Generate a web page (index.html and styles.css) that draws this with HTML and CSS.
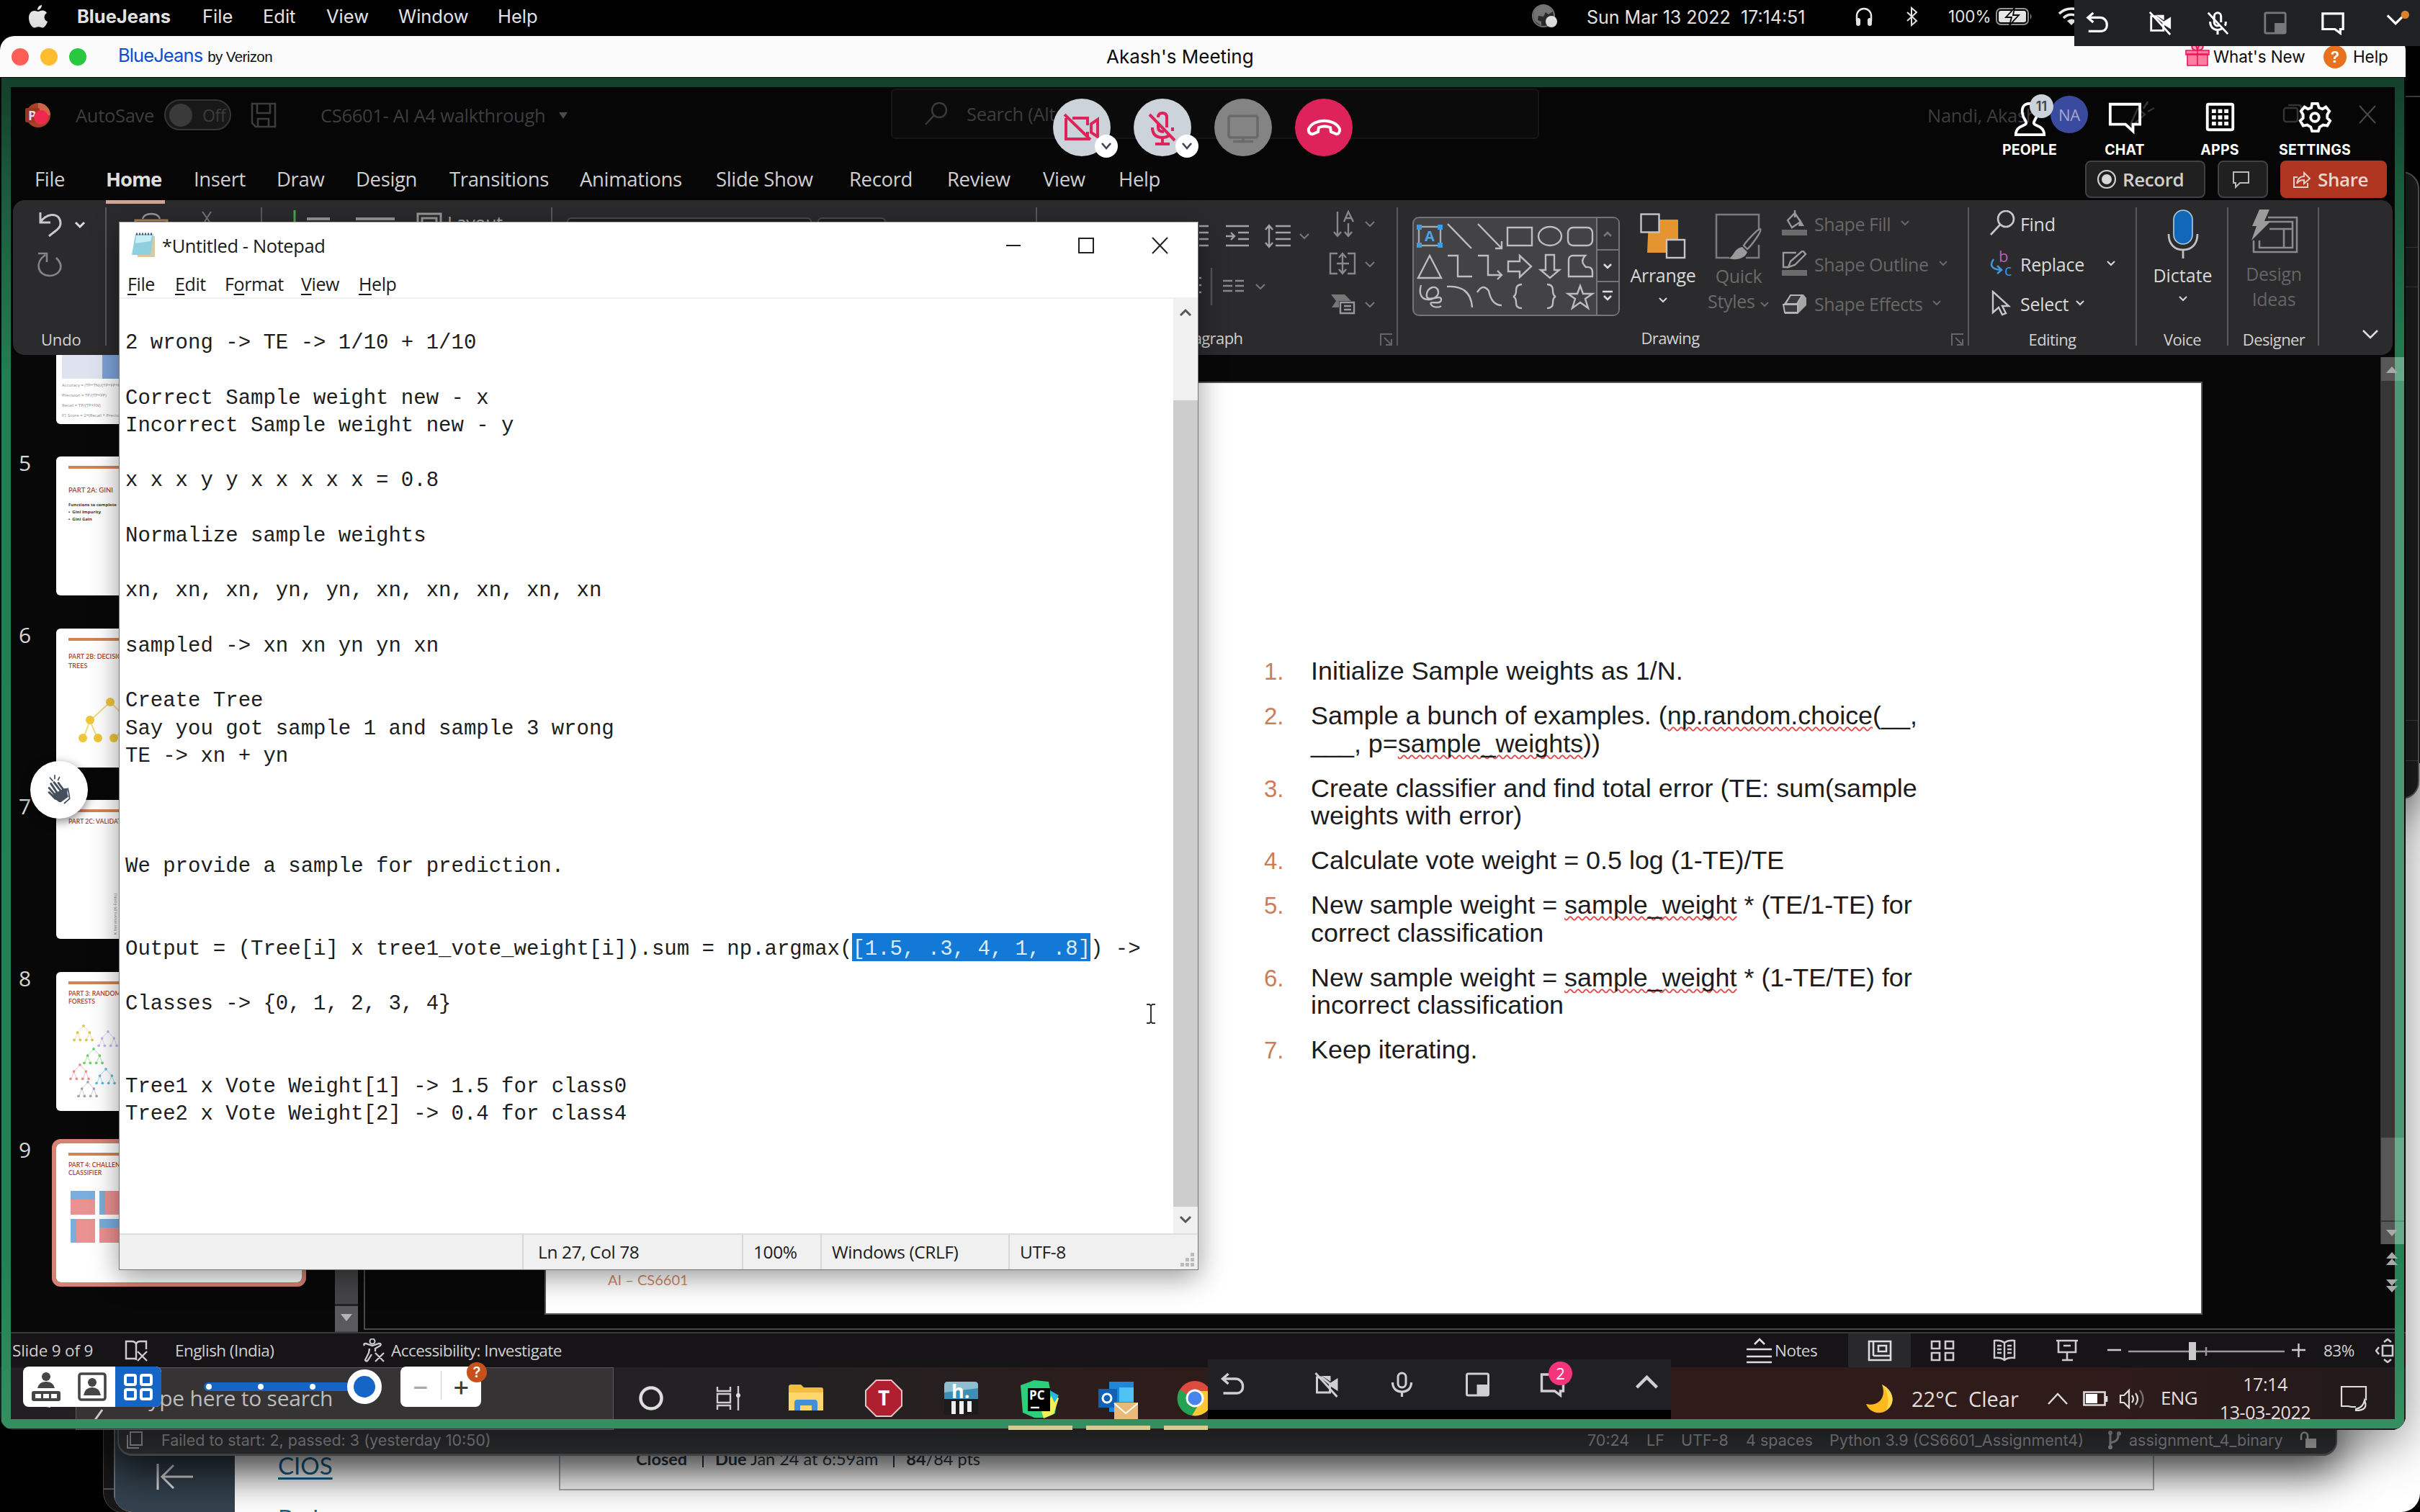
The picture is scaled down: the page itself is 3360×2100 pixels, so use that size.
FILE: index.html
```html
<!DOCTYPE html>
<html lang="en">
<head>
<meta charset="utf-8">
<title>Akash's Meeting</title>
<link rel="stylesheet" href="styles.css">
</head>
<body>
<svg width="0" height="0" class="defs">
  <defs>
    <symbol id="chev" viewBox="0 0 14 10"><path d="M2 2l5 5 5-5" fill="none" stroke="currentColor" stroke-width="2"/></symbol>
    <symbol id="i-undo" viewBox="0 0 36 36"><path d="M12 3L4 10l8 7M4 10h18a10 10 0 0 1 10 10v2a8 8 0 0 1-8 8H5" fill="none" stroke="currentColor" stroke-width="3.4"/></symbol>
    <symbol id="i-camoff" viewBox="0 0 36 36"><path d="M5 8v21h18V17L12 8z" fill="none" stroke="currentColor" stroke-width="3"/><path d="M23 16l11-7v18l-11-7zM12 6h12v8z" fill="currentColor"/><path d="M3 2l30 33" stroke="currentColor" stroke-width="3"/></symbol>
    <symbol id="i-micoff" viewBox="0 0 36 36"><path d="M13 13V8a5 5 0 0 1 10 0v9M13 13v4a5 5 0 0 0 8 4M7 16c0 7 4 12 11 12 3 0 5-1 7-2M30 16c0 2 0 4-1 6M18 28v7" fill="none" stroke="currentColor" stroke-width="3.2"/><path d="M4 3l29 31" stroke="currentColor" stroke-width="3"/></symbol>
    <symbol id="i-mic" viewBox="0 0 36 36"><rect x="12.500" y="2" width="11" height="20" rx="5.500" fill="none" stroke="currentColor" stroke-width="3"/><path d="M5 15c0 8 5 13 13 13s13-5 13-13M18 28v7" fill="none" stroke="currentColor" stroke-width="3.2"/></symbol>
    <symbol id="i-pip" viewBox="0 0 36 36"><rect x="3" y="3" width="30" height="30" rx="2" fill="none" stroke="currentColor" stroke-width="3"/><path d="M17 18h16v15H17z" fill="currentColor"/></symbol>
    <symbol id="i-chat" viewBox="0 0 36 36"><path d="M3 4h30v23h-4v6l-8-6H3z" fill="none" stroke="currentColor" stroke-width="3.4"/></symbol>
    <symbol id="tree" viewBox="0 0 34 28"><path d="M17 3L8 13M17 3l9 10M8 13L4 24M8 13l4 11M26 13l-5 11M26 13l4 11" fill="none" stroke="currentColor" stroke-width="1" opacity=".6"/><g fill="currentColor"><circle cx="17" cy="3" r="2"/><circle cx="8" cy="13" r="2"/><circle cx="26" cy="13" r="2"/><circle cx="3" cy="24" r="2"/><circle cx="12" cy="24" r="2"/><circle cx="21" cy="24" r="2"/><circle cx="30" cy="24" r="2"/></g></symbol>
  </defs>
</svg>

<main class="desktop">
  <section class="back-window"><i></i></section>
  <section class="browser">
    <aside class="canvas-nav"><svg width="52" height="40" viewBox="0 0 52 40"><path d="M2 2v36M51 20H8M24 4L8 20l16 16" fill="none" stroke="#e6e6e6" stroke-width="3"/></svg></aside>
    <nav class="course-links"><a>CIOS</a><a>Badgr</a></nav>
    <div class="assignment"><b>Closed</b><span><b>Due</b> Jan 24 at 6:59am</span><span><b>84</b>/84 pts</span></div>
  </section>
  <section class="side-window"><i></i><i></i><i></i><i></i></section>
  <div class="side-line"></div>

  <footer class="ide-bar">
    <svg width="24" height="26" viewBox="0 0 24 26"><path d="M6 2h16v18H6zM2 6v18h16" fill="none" stroke="#8a8b8d" stroke-width="2"/></svg>
    <span>Failed to start: 2, passed: 3 (yesterday 10:50)</span>
    <span>70:24</span><span>LF</span><span>UTF-8</span><span>4 spaces</span><span>Python 3.9 (CS6601_Assignment4)</span>
    <svg width="20" height="28" viewBox="0 0 20 28"><path d="M4 5v18M4 18c8-2 11-4 11-11" fill="none" stroke="#8a8b8d" stroke-width="3"/><g fill="#8a8b8d"><circle cx="4" cy="4" r="3"/><circle cx="4" cy="24" r="3"/><circle cx="16" cy="5" r="3"/></g></svg>
    <span>assignment_4_binary</span>
    <svg width="24" height="24" viewBox="0 0 24 24"><path d="M8 10h15v13H8z" fill="#a0a0a0"/><path d="M2 12V6a4 4 0 0 1 9 0v5" fill="none" stroke="#a0a0a0" stroke-width="2.500"/></svg>
  </footer>

  <header class="menubar">
    <svg width="28" height="32" viewBox="0 0 28 32"><path d="M19 0c0 4-3 7-6 7 0-4 3-7 6-7zM14 9c1.500 0 3-1.500 6-1.500 2.500 0 5 1.500 6 3.500-5 3-4.500 10 1 12-1.500 4-4 8.500-7 8.500-2 0-3-1.200-5.500-1.200S11 31.500 9 31.500C5 31.500 1 24 1 18 1 11 5 8 9 8c2 0 3.500 1 5 1z" fill="#ececec"/></svg>
    <b>BlueJeans</b><span>File</span><span>Edit</span><span>View</span><span>Window</span><span>Help</span>
    <svg width="38" height="36" viewBox="0 0 38 36"><circle cx="17" cy="17" r="15" fill="#2b2b2b" stroke="#777" stroke-width="2"/><path d="M5 9c5-6 14-9 20-4l5 6-6 4-4-3-3 6-7-1-1 6 5 2v6l-8-6c-4-5-3-11-1-16z" fill="#777"/><circle cx="28" cy="25" r="8" fill="#e8e8e8"/></svg>
    <span class="clock">Sun Mar 13 2022&nbsp; 17:14:51</span>
    <svg width="28" height="28" viewBox="0 0 28 28"><path d="M4 20v-7a10 10 0 0 1 20 0v7" fill="none" stroke="#eee" stroke-width="2.500"/><rect x="3" y="16" width="6" height="11" rx="3" fill="#eee"/><rect x="19" y="16" width="6" height="11" rx="3" fill="#eee"/></svg>
    <svg width="18" height="28" viewBox="0 0 18 28"><path d="M2 8l13 12-7 6V2l7 6L2 20" fill="none" stroke="#eee" stroke-width="2"/></svg>
    <span class="pct">100%</span>
    <svg width="52" height="24" viewBox="0 0 52 24"><rect x="1" y="1" width="44" height="22" rx="6" fill="none" stroke="#999" stroke-width="2"/><rect x="4" y="4" width="38" height="16" rx="3" fill="#eee"/><path d="M48 8q3 4 0 8z" fill="#999"/><path d="M26 0l-12 13h8l-3 11 13-14h-8z" fill="#eee" stroke="#000" stroke-width="1.800"/></svg>
    <svg width="36" height="26" viewBox="0 0 36 26"><path d="M1 9a24 24 0 0 1 34 0M7 15a15 15 0 0 1 22 0" fill="none" stroke="#eee" stroke-width="3.500"/><path d="M12 19l6 6 6-6q-6-5-12 0z" fill="#eee"/></svg>
  </header>

  <div class="float-bar">
    <svg><use href="#i-undo"/></svg><svg><use href="#i-camoff"/></svg><svg><use href="#i-micoff"/></svg><svg class="dim"><use href="#i-pip"/></svg><svg><use href="#i-chat"/></svg>
    <svg class="down" viewBox="0 0 36 36"><path d="M4 12l12 12 12-12" fill="none" stroke="#fff" stroke-width="3.400"/><circle cx="30" cy="11" r="6" fill="#d9822b"/></svg>
  </div>

  <section class="meeting">
    <header class="titlebar">
      <div class="lights"><i></i><i></i><i></i></div>
      <div class="brand"><span>BlueJeans</span><small>by Verizon</small></div>
      <h1>Akash's Meeting</h1>
      <svg class="gift" width="34" height="32" viewBox="0 0 34 32"><path d="M17 9c-10 0-9-9-4-8 3 1 4 8 4 8zm0 0c10 0 9-9 4-8-3 1-4 8-4 8z" fill="#ff9db4" stroke="#e8175d" stroke-width="2"/><path d="M3 14h28v16H3zM1 9h32v6H1z" fill="#ff7f9f" stroke="#e8175d" stroke-width="1.600"/><path d="M17 9v21" stroke="#e8175d" stroke-width="1.600"/></svg>
      <span>What's New</span><i class="q">?</i><span>Help</span>
    </header>

    <div class="share">
      <div class="ppt-title">
        <svg width="36" height="36" viewBox="0 0 36 36"><circle cx="18" cy="18" r="17" fill="#a8412a"/><path d="M18 1a17 17 0 0 1 17 17H18z" fill="#d0644a"/><rect x="0" y="8" width="20" height="20" rx="2" fill="#9c3520"/><text x="4" y="25" font-size="18" font-weight="700" fill="#ddd">P</text><circle cx="22" cy="21" r="10" fill="#f02850"/></svg>
        <span>AutoSave</span>
        <div class="toggle"><i></i>Off</div>
        <svg width="36" height="36" viewBox="0 0 36 36"><path d="M2 2h32v32H7l-5-5zM9 2v13h18V2M10 34V23h15v11" fill="none" stroke="#3c3c3e" stroke-width="2.600"/></svg>
        <span>CS6601- AI A4 walkthrough</span><em></em>
        <div class="search"><svg width="34" height="34" viewBox="0 0 34 34"><circle cx="21" cy="12" r="10" fill="none" stroke="#3a3a3d" stroke-width="2.500"/><path d="M14 19L2 32" stroke="#3a3a3d" stroke-width="2.500"/></svg>Search (Alt+Q)</div>
        <span class="user">Nandi, Akash</span><i class="na">NA</i>
        <svg width="430" height="40" viewBox="0 0 430 40"><g fill="none" stroke="#343436" stroke-width="2.500"><path d="M58 34l10-22 10 8-18 16zM76 12l6-10M82 16l9-5M80 4l2 2"/><rect x="271" y="11" width="19" height="19" rx="3"/><path d="M277 7h14q4 0 4 4v14"/></g><path d="M376 8l22 24M398 8l-22 24" stroke="#4a4a4c" stroke-width="2"/></svg>
      </div>

      <nav class="tabs">
        <span>File</span><b>Home</b><span>Insert</span><span>Draw</span><span>Design</span><span>Transitions</span><span>Animations</span><span>Slide Show</span><span>Record</span><span>Review</span><span>View</span><span>Help</span>
        <div class="btn rec"><svg width="28" height="28" viewBox="0 0 28 28"><circle cx="14" cy="14" r="12" fill="none" stroke="#d0d0d0" stroke-width="2.200"/><circle cx="14" cy="14" r="7" fill="#d8d8d8"/></svg>Record</div>
        <div class="btn com"><svg width="26" height="26" viewBox="0 0 26 26"><path d="M2 3h21v15H11l-6 6v-6H2z" fill="none" stroke="#bbb" stroke-width="2"/></svg></div>
        <div class="btn shr"><svg width="28" height="28" viewBox="0 0 28 28"><path d="M8 11H3v14h19v-6" fill="none" stroke="#e8d0ca" stroke-width="2"/><path d="M7 20c1-7 5-10 10-10V5l8 8-8 7v-5c-5 0-7 1-10 5z" fill="none" stroke="#e8d0ca" stroke-width="2"/></svg>Share</div>
      </nav>

      <div class="ribbon">
        <div class="group g-undo"><svg width="129" height="171" viewBox="0 0 129 171"><g fill="none" stroke="#b5b5b5" stroke-width="3"><path d="M38 17v14h14M38 31c6-12 26-16 28 0 1 8-8 12-16 19" stroke="#c8c8c8"/><path d="M35 74h12v12M60 80c14 14 2 25-9 25-16 0-22-18-6-29" stroke="#858585" stroke-width="2.600"/><path d="M87 31l6 6 6-6" stroke="#ddd"/></g></svg><p>Undo</p></div>
        <div class="group g-clip"><svg width="216" height="30" viewBox="0 0 216 30"><path d="M40 30v-2h44v2" fill="none" stroke="#a8865a" stroke-width="3"/><path d="M50 26q2-7 12-7 10 0 12 7" fill="none" stroke="#999" stroke-width="2.400"/><path d="M133 16l10 14M145 16l-9 14" stroke="#777" stroke-width="2"/></svg></div>
        <div class="group g-slides"><svg width="403" height="30" viewBox="0 0 403 30"><path d="M45 14v16" stroke="#4aa84f" stroke-width="3"/><path d="M62 26h32M130 26h54" stroke="#999" stroke-width="4"/><path d="M216 30V19h32v11M222 30v-5h20v5" fill="none" stroke="#999" stroke-width="3"/></svg><span>Layout</span></div>
        <div class="group g-font"><i></i><i></i></div>
        <div class="group g-para"><svg width="501" height="171" viewBox="1439 278 501 171"><g fill="none" stroke="#a2a2a2" stroke-width="2.400">
          <path d="M1664 314h13M1664 323h13M1664 332h13M1664 341h13M1701 314h32M1718 323h15M1718 332h15M1701 341h32M1701 328h12M1708 323l5 5-5 5M1770 314h21M1770 323h21M1770 332h21M1770 341h21M1761 314v28M1756 319l5-6 5 6M1756 337l5 6 5-6"/>
          <path d="M1856 294v33M1851 322l5 6 5-6M1871 310v17M1866 322l5 6 5-6M1865 308l6-14 7 14M1867 303h8" stroke="#888"/>
          <path d="M1856 352h-10v28h10M1870 352h10v28h-10M1863 353v25M1858 358l5-6 5 6M1858 374l5 6 5-6M1855 366h17" stroke="#888"/>
          <path d="M1697 390h13M1697 397h13M1697 404h13M1714 390h12M1714 397h12M1714 404h12" stroke="#888"/>
          <path d="M1681 372v52" stroke="#555"/><path d="M1664 386h3M1664 396h3M1664 406h3"/>
          <path d="M1860 420h19v15h-19zM1865 425h10M1865 430h10" stroke="#999"/></g>
          <path d="M1847 409h19l9 9h-17v9h-10l6-9z" fill="#777"/>
          <g fill="none" stroke="#777" stroke-width="2.200"><path d="M1804 325l6 6 6-6M1895 308l6 6 6-6M1895 364l6 6 6-6M1895 420l6 6 6-6M1743 395l6 6 6-6"/></g></svg><p>Paragraph</p><svg class="launch" width="18" height="18" viewBox="0 0 18 18"><path d="M1 17V1h16M6 6l10 10M16 8v8H8" fill="none" stroke="#666" stroke-width="2"/></svg></div>

        <div class="group g-draw">
          <div class="tools">
            <svg class="gallery" width="288" height="138" viewBox="1961 301 288 138"><rect x="1962" y="302" width="286" height="136" rx="8" fill="#434244" stroke="#757577" stroke-width="2"/><path d="M2217 303v134h23q7 0 7-7V310q0-7-7-7z" fill="#353436"/><path d="M2217 303v134M2217 347h31M2217 391h31" stroke="#757577" stroke-width="2"/>
              <rect x="1970" y="315" width="30" height="26" fill="none" stroke="#aaa" stroke-width="2.400"/><path d="M1967 312h7v7h-7zM1996 312h7v7h-7zM1967 337h7v7h-7zM1996 337h7v7h-7z" fill="#3e9be0"/><text x="1978" y="335" font-size="20" font-weight="700" fill="#4aa5ea">A</text>
              <g fill="none" stroke="#bdbdbd" stroke-width="2.400"><path d="M2010 311l33 34M2052 311l33 34M2085 335v10h-9"/><rect x="2093" y="316" width="34" height="25"/><ellipse cx="2152" cy="328" rx="16" ry="13"/><rect x="2177" y="316" width="34" height="25" rx="7"/>
              <path d="M1985 355l16 31h-32zM2010 355h14v29h20M2052 355h14v27h19M2079 376l6 6-6 6M2094 363h16v-8l16 15-16 15v-8h-16zM2146 354h12v21h7l-13 11-13-11h7zM2178 361q0-5 5-6h18q-8 8 1 16 9-1 9 7v6h-33z"/>
              <path d="M1973 396c-8 28 24 22 24 10 0-12-18-8-16 6 2 8 20-4 20 4 0 9-18 0-14 7 3 5 12 4 14 2M2009 398q33-2 35 29M2051 406q8-13 16-2 4 20 18 20M2113 395q-8 0-8 8 0 8-4 9 4 1 4 9 0 7 8 7M2148 395q8 0 8 8 0 8 4 9-4 1-4 9 0 7-8 7M2194 397l4 11h13l-10 7 4 13-11-8-11 8 4-13-10-7h13z"/></g>
              <g fill="none" stroke="#ddd" stroke-width="2.600"><path d="M2227 328l5-5 5 5" stroke="#777"/><path d="M2227 367l5 5 5-5M2225 405h14M2227 411l5 5 5-5"/></g></svg>
            <div class="big arrange"><svg width="64" height="64" viewBox="0 0 64 64"><path d="M12 9h41v46H10z" fill="#e5952f"/><rect x="1.500" y="1.500" width="25" height="25" fill="#2b2a2c" stroke="#c6c6c6" stroke-width="2.400"/><rect x="37" y="37" width="25" height="25" fill="#2b2a2c" stroke="#c6c6c6" stroke-width="2.400"/></svg><span>Arrange</span><svg class="cv"><use href="#chev"/></svg></div>
            <div class="big quick"><svg width="68" height="66" viewBox="0 0 68 66"><path d="M62 22V2H3v60h18M44 62h18V44" fill="none" stroke="#7b7b7b" stroke-width="2.600"/><path d="M64 22c3 3-14 25-18 28l-5-5C44 40 60 22 64 22z" fill="none" stroke="#8c8c8c" stroke-width="2.400"/><path d="M39 47l7 7c-3 9-15 12-26 9 8-3 7-14 19-16z" fill="#9a9a9a"/></svg><span>Quick</span><span>Styles <svg class="cv"><use href="#chev"/></svg></span></div>
            <div class="shape-list">
              <div><svg width="36" height="36" viewBox="0 0 36 36"><path d="M8 14L18 4l8 12-12 8zM18 0v10" fill="none" stroke="#9a9a9a" stroke-width="2.400"/><path d="M25 12l6 10h-8z" fill="#9a9a9a"/><path d="M0 27h35v8H0z" fill="#6c6c6c"/></svg>Shape Fill<svg class="cv"><use href="#chev"/></svg></div>
              <div><svg width="36" height="36" viewBox="0 0 36 36"><path d="M20 3H2v20h7M9 23l3-8L29 0l4 5-15 15z" fill="none" stroke="#9a9a9a" stroke-width="2.400"/><path d="M0 27h35v8H0z" fill="#6c6c6c"/></svg>Shape Outline<svg class="cv"><use href="#chev"/></svg></div>
              <div><svg width="36" height="36" viewBox="0 0 36 36"><path d="M2 20L12 6h18l4 5v10L22 33H4z" fill="#a6a6a6"/><path d="M2 20h20v11H4zM12 7h16l-7 12H5z" fill="#3a3a3c" stroke="#b5b5b5" stroke-width="2"/></svg>Shape Effects<svg class="cv"><use href="#chev"/></svg></div>
            </div>
          </div>
          <p>Drawing</p><svg class="launch" width="18" height="18" viewBox="0 0 18 18"><path d="M1 17V1h16M6 6l10 10M16 8v8H8" fill="none" stroke="#666" stroke-width="2"/></svg>
        </div>

        <div class="group g-edit">
          <div class="edit-list">
            <div><svg width="36" height="36" viewBox="0 0 36 36"><circle cx="22" cy="12" r="11" fill="none" stroke="#c8c8c8" stroke-width="2.600"/><path d="M14 20L1 34" stroke="#c8c8c8" stroke-width="2.600"/></svg>Find</div>
            <div><svg width="36" height="36" viewBox="0 0 36 36"><path d="M5 12c-6 8-3 14 10 15M10 21l6 6-6 5" fill="none" stroke="#3f96d8" stroke-width="2.600"/><text x="12" y="16" font-size="22" fill="#b562b0">b</text><text x="20" y="35" font-size="21" fill="#3f96d8">c</text></svg>Replace<svg class="cv far"><use href="#chev"/></svg></div>
            <div><svg width="36" height="36" viewBox="0 0 36 36"><path d="M4 2v29l8-7 5 10 5-2-5-10h9z" fill="none" stroke="#c8c8c8" stroke-width="2.400"/></svg>Select<svg class="cv"><use href="#chev"/></svg></div>
          </div><p>Editing</p>
        </div>
        <div class="group g-voice"><div class="big"><svg width="44" height="68" viewBox="0 0 44 68"><rect x="9" y="1" width="26" height="47" rx="13" fill="#1168b8" stroke="#b6cde0" stroke-width="1.600"/><path d="M2 34c0 14 8 22 20 22s20-8 20-22M22 56v12" fill="none" stroke="#c0c0c0" stroke-width="2.800"/></svg><span>Dictate</span><svg class="cv"><use href="#chev"/></svg></div><p>Voice</p></div>
        <div class="group g-ideas"><div class="big dim"><svg width="68" height="64" viewBox="0 0 68 64"><path d="M26 12h40v48H6V44M26 18h34v36H14V44M28 28h32M48 28v26" fill="none" stroke="#8b8b8b" stroke-width="2.600"/><path d="M14 1h14l-7 16h9L3 44l7-20H4z" fill="#9b9b9b"/></svg><span>Design</span><span>Ideas</span></div><p>Designer</p></div>
        <svg class="collapse" width="24" height="14" viewBox="0 0 24 14"><path d="M2 2l10 10L22 2" fill="none" stroke="#ddd" stroke-width="2.600"/></svg>
      </div>

      <div class="work">
        <ol class="thumbs">
          <li><b></b><div class="thumb t4"><div class="cells"><i></i><i></i></div><small>Accuracy = (TP+TN)/(TP+FP+FN+TN)</small><small>Precision = TP/(TP+FP)</small><small>Recall = TP/(TP+FN)</small><small>F1 Score = 2*(Recall * Precision)/(Recall)</small></div></li>
          <li><b>5</b><div class="thumb"><hr><h3 class="low">PART 2A: GINI</h3><small class="dk">Functions to complete<br>•&nbsp; Gini Impurity<br>•&nbsp; Gini Gain</small></div></li>
          <li><b>6</b><div class="thumb"><hr><h3>PART 2B: DECISION<br>TREES</h3><svg width="160" height="80" viewBox="0 0 160 80"><path d="M58 8L30 34M58 8l26 26M30 34L20 60M30 34l11 26M84 34L64 60" stroke="#f0dc80" stroke-width="2"/><g fill="#eec63a"><circle cx="58" cy="8" r="6"/><circle cx="30" cy="33" r="6"/><circle cx="20" cy="58" r="6"/><circle cx="41" cy="58" r="6"/><circle cx="63" cy="58" r="6"/></g></svg></div></li>
          <li><b>7</b><div class="thumb"><hr><h3>PART 2C: VALIDATION</h3><small class="vert">K Iterations (K-Folds)</small></div></li>
          <li><b>8</b><div class="thumb"><hr><h3>PART 3: RANDOM<br>FORESTS</h3><svg width="90" height="112" viewBox="0 0 90 112"><use href="#tree" x="4" y="8" width="34" height="26" color="#e0c04a"/><use href="#tree" x="38" y="16" width="34" height="26" color="#c8b4ec"/><use href="#tree" x="17" y="40" width="36" height="26" color="#6ccf70"/><use href="#tree" x="-2" y="62" width="36" height="26" color="#f08a8a"/><use href="#tree" x="34" y="68" width="36" height="26" color="#5fb8e8"/><use href="#tree" x="8" y="86" width="38" height="26" color="#a8a0b0"/></svg></div></li>
          <li><b>9</b><div class="thumb sel"><hr><h3>PART 4: CHALLENGE<br>CLASSIFIER</h3><div class="plots"><i></i><i></i><i></i><i></i></div></div></li>
        </ol>
        <div class="pane-scroll"><i></i></div>
        <article class="slide">
          <ol>
            <li>Initialize Sample weights as 1/N.</li>
            <li>Sample a bunch of examples. (<u>np.random.choice</u>(__,<br>___, p=<u>sample_weights</u>))</li>
            <li>Create classifier and find total error (TE: sum(sample<br>weights with error)</li>
            <li>Calculate vote weight = 0.5 log (1-TE)/TE</li>
            <li>New sample weight = <u>sample_weight</u> * (TE/1-TE) for<br>correct classification</li>
            <li>New sample weight = <u>sample_weight</u> * (1-TE/TE) for<br>incorrect classification</li>
            <li>Keep iterating.</li>
          </ol>
          <footer>AI – CS6601</footer>
        </article>
      </div>

      <div class="status">
        <span>Slide 9 of 9</span>
        <svg width="34" height="32" viewBox="0 0 34 32"><path d="M15 27H2V3h8q5 0 6 4v22M16 7q1-4 6-4h8v11M18 17l13 13M31 17L18 30" fill="none" stroke="#ccc" stroke-width="2.400"/></svg>
        <span>English (India)</span>
        <svg width="34" height="34" viewBox="0 0 34 34"><path d="M3 10q-2-3 2-3l9 3 9-3q4 0 2 3l-7 4v4M10 14L9 20 4 30q2 3 4 0l5-8M18 20l12 12M30 20L18 32" fill="none" stroke="#ccc" stroke-width="2.300"/><circle cx="14" cy="4" r="3.500" fill="none" stroke="#ccc" stroke-width="2"/></svg>
        <span>Accessibility: Investigate</span>
        <svg width="36" height="36" viewBox="0 0 36 36"><path d="M0 16h35M0 26h35M0 34h35M11 9l7-7 7 7" fill="none" stroke="#ddd" stroke-width="2.600"/></svg>
        <span>Notes</span>
        <div class="on"><svg width="34" height="30" viewBox="0 0 34 30"><path d="M2 2h30v26H2zM8 2v20M8 22h24M15 8h11v8H15z" fill="none" stroke="#ddd" stroke-width="2.600"/></svg></div>
        <svg width="34" height="30" viewBox="0 0 34 30"><path d="M2 2h11v10H2zM21 2h11v10H21zM2 18h11v10H2zM21 18h11v10H21z" fill="none" stroke="#ccc" stroke-width="2.600"/></svg>
        <svg width="34" height="32" viewBox="0 0 34 32"><path d="M17 5q-5-4-14-3v24q9-1 14 3 5-4 14-3V2q-9-1-14 3v24M7 9h6M7 14h6M7 19h6M21 9h6M21 14h6M21 19h6" fill="none" stroke="#ccc" stroke-width="2.400"/></svg>
        <svg width="34" height="32" viewBox="0 0 34 32"><path d="M2 2h30M5 2v16h24V2M12 9h10M17 18v10M10 29h15" fill="none" stroke="#ccc" stroke-width="2.600"/></svg>
        <svg width="280" height="30" viewBox="0 0 280 30"><path d="M0 14h19M256 14h19M265.500 5v19" stroke="#ccc" stroke-width="2.400"/><path d="M29 16h217M137 10v12" stroke="#999" stroke-width="2.400"/><path d="M113 3h10v25h-10z" fill="#c9c9c9"/></svg>
        <span class="z">83%</span>
        <svg width="34" height="34" viewBox="0 0 34 34"><path d="M10 10h14v14H10zM12 5l5-4 5 4M12 29l5 4 5-4M5 12l-4 5 4 5M29 12l4 5-4 5" fill="none" stroke="#ccc" stroke-width="2.600"/></svg>
      </div>

      <div class="taskbar">
        <svg class="win" width="40" height="40" viewBox="0 0 40 40"><path d="M2 22l14 2v12L2 34zM18 24l18 2v14l-18-3z" fill="#ddd"/></svg>
        <div class="tsearch"><svg width="30" height="30" viewBox="0 0 30 30"><path d="M14 12L4 26" stroke="#ccc" stroke-width="3"/></svg>Type here to search</div>
        <div class="apps">
          <svg viewBox="0 0 60 60"><circle cx="30" cy="30" r="14.500" fill="none" stroke="#ddd" stroke-width="4.500"/></svg>
          <svg viewBox="0 0 60 60"><path d="M14 14v6h18v-6M14 46v-6h18v6M14 24h18v12H14zM43 13v34" fill="none" stroke="#ccc" stroke-width="2.400"/><circle cx="43" cy="26" r="3" fill="#ddd"/></svg>
          <svg viewBox="0 0 60 60"><path d="M6 14q0-3 3-3h14l4 4h24q3 0 3 3v28H6z" fill="#f2bd3e"/><path d="M6 22h48v25H6z" fill="#ffd66b"/><path d="M14 47V36q0-4 4-4h24q4 0 4 4v11h-8v-7H22v7z" fill="#3f90d8"/></svg>
          <svg viewBox="0 0 60 60"><path d="M19.500 5h21L55 19.500v21L40.500 55h-21L5 40.500v-21z" fill="#b01f30" stroke="#e6c4c8" stroke-width="2"/><text x="30" y="40" text-anchor="middle" font-size="28" font-weight="700" fill="#fff">T</text></svg>
          <svg viewBox="0 0 60 60"><rect x="7" y="7" width="47" height="46" rx="4" fill="#1c1c1e"/><path d="M7 31V12q0-5 5-5h37q5 0 5 5v19z" fill="#3b8fb5"/><path d="M7 22V12q0-5 5-5h37q5 0 5 5v4z" fill="#8fbdd0"/><text x="17" y="30" font-size="27" font-weight="700" fill="#fff">h.</text><path d="M20 34v18M31 34v18M42 34v15" stroke="#eee" stroke-width="6"/></svg>
          <svg viewBox="0 0 60 60"><path d="M5 12L24 5l20 2 3 16 9 6-3 22-14 6H24L8 50z" fill="#2bd07c"/><path d="M34 48l16-24 8 6-7 22-14 6z" fill="#f1f05a"/><path d="M44 18l14 8-6 10z" fill="#25b7e8"/><rect x="15" y="16" width="31" height="32" fill="#000"/><text x="17" y="32" font-size="17" font-weight="700" fill="#fff">PC</text><path d="M19 43h12" stroke="#fff" stroke-width="2.400"/></svg>
          <svg viewBox="0 0 60 60"><path d="M20 7h34v42H20z" fill="#1f86d8"/><path d="M34 15h20v20H34z" fill="#4fc3f4"/><path d="M5 17h26v26H5z" fill="#0f62b4"/><circle cx="17" cy="30" r="6" fill="none" stroke="#fff" stroke-width="3"/><path d="M27 36h33v24H27z" fill="#e9b978"/><path d="M27 37l16 14 17-14" fill="none" stroke="#fff" stroke-width="2"/></svg>
          <svg viewBox="0 0 60 60"><circle cx="32" cy="30" r="24" fill="#dd4b3e"/><path d="M11 18a24 24 0 0 0 17 36l11-18z" fill="#23a455"/><path d="M32 20h22a24 24 0 0 1-26 34l11-18z" fill="#fcc934"/><circle cx="32" cy="30" r="11" fill="#4684ee" stroke="#fff" stroke-width="3"/></svg>
        </div>
        <div class="inner-bar">
          <svg><use href="#i-undo"/></svg><svg><use href="#i-camoff"/></svg><svg><use href="#i-mic"/></svg><svg><use href="#i-pip"/></svg><svg><use href="#i-chat"/></svg><svg viewBox="0 0 36 36"><path d="M4 22L18 8l14 14" fill="none" stroke="currentColor" stroke-width="4.500"/></svg>
          <i class="cnt">2</i>
        </div>
        <div class="tray">
          <svg width="42" height="42" viewBox="0 0 42 42"><path d="M23 1c16 8 20 26 6 36-10 7-24 2-28-9 16 4 29-8 22-27z" fill="#fbb91e"/><path d="M23 1c16 8 20 26 6 36 4-12 4-24-6-36z" fill="#ffd94f"/></svg>
          <span class="wx">22°C&nbsp; Clear</span>
          <svg width="30" height="20" viewBox="0 0 30 20"><path d="M2 17L15 3l13 14" fill="none" stroke="#ddd" stroke-width="2.400"/></svg>
          <svg width="36" height="22" viewBox="0 0 36 22"><path d="M1.500 1.500h29v18h-29zM33 7v8" fill="none" stroke="#ddd" stroke-width="2.600"/><path d="M4 4h16v13H4z" fill="#fff"/></svg>
          <svg width="40" height="30" viewBox="0 0 40 30"><path d="M2 10h5l7-7v24l-7-7H2zM18 10q4 5 0 10M23 7q6 8 0 16" fill="none" stroke="#ddd" stroke-width="2.200"/><path d="M29 3q9 12 0 24" fill="none" stroke="#777" stroke-width="2.200"/></svg>
          <span class="eng">ENG</span>
          <div class="time">17:14<br>13-03-2022</div>
          <svg width="40" height="40" viewBox="0 0 40 40"><path d="M22 31h-6l-5-1H2V3h34v19M22 34q10-2 12-12 6 14-12 14z" fill="none" stroke="#ddd" stroke-width="2.200"/></svg>
        </div>
      </div>

      <svg class="vscroll" width="34" height="1310" viewBox="3305 494 34 1310"><path d="M3305 496h33v1232h-33z" fill="#fff" opacity=".19"/><path d="M3306 496h32v33h-32zM3306 1580h32v115h-32zM3306 1697h32v31h-32z" fill="#fff" opacity=".17"/><path d="M3313 518l8-9 8 9zM3313 1708l8 9 8-9zM3313 1748l8-9 8 9zM3313 1757l8-9 8 9zM3313 1777l8 9 8-9zM3313 1786l8 9 8-9z" fill="#a9a9a9"/></svg>
      <div class="frame"></div>
      <div class="task-marks"><i></i><i></i><i></i></div>
    </div>

    <section class="notepad">
      <header><svg width="36" height="36" viewBox="0 0 36 36"><path d="M8 5h26v29H10z" fill="#d9c9a0"/><path d="M7 2h25l-4 29H2z" fill="#8fd0df"/><path d="M8 4h22l-2 8-21 3z" fill="#c9edf4"/><path d="M8 2h24" stroke="#557" stroke-width="3" stroke-dasharray="2 2"/></svg>*Untitled - Notepad
        <svg class="wc" width="226" height="24" viewBox="0 0 226 24"><path d="M1 12h20M102 2h20v20h-20zM204 1l21 22M225 1l-21 22" fill="none" stroke="#222" stroke-width="2"/></svg></header>
      <nav><span><u>F</u>ile</span><span><u>E</u>dit</span><span>F<u>o</u>rmat</span><span><u>V</u>iew</span><span><u>H</u>elp</span></nav>
      <div class="editor">
<pre>2 wrong -&gt; TE -&gt; 1/10 + 1/10

Correct Sample weight new - x
Incorrect Sample weight new - y

x x x y y x x x x x = 0.8

Normalize sample weights

xn, xn, xn, yn, yn, xn, xn, xn, xn, xn

sampled -&gt; xn xn yn yn xn

Create Tree
Say you got sample 1 and sample 3 wrong
TE -&gt; xn + yn



We provide a sample for prediction.


Output = (Tree[i] x tree1_vote_weight[i]).sum = np.argmax(<mark>[1.5, .3, 4, 1, .8]</mark>) -&gt;

Classes -&gt; {0, 1, 2, 3, 4}


Tree1 x Vote Weight[1] -&gt; 1.5 for class0
Tree2 x Vote Weight[2] -&gt; 0.4 for class4</pre>
        <div class="nscroll"><svg width="18" height="12" viewBox="0 0 18 12"><path d="M2 10l7-7 7 7" fill="none" stroke="#555" stroke-width="3"/></svg><i></i><svg width="18" height="12" viewBox="0 0 18 12"><path d="M2 2l7 7 7-7" fill="none" stroke="#555" stroke-width="3"/></svg></div>
      </div>
      <footer><span></span><span>Ln 27, Col 78</span><span>100%</span><span>Windows (CRLF)</span><span>UTF-8</span><svg width="22" height="22" viewBox="0 0 22 22"><path d="M15 1h5v5h-5zM8 8h5v5H8zM15 8h5v5h-5zM1 15h5v5H1zM8 15h5v5H8zM15 15h5v5h-5z" fill="#bbb"/></svg></footer>
      <svg class="ibeam" width="14" height="28" viewBox="0 0 14 28"><path d="M1 1h4l2 2 2-2h4M1 27h4l2-2 2 2h4M7 3v22" fill="none" stroke="#333" stroke-width="2"/></svg>
    </section>

    <div class="call-controls">
      <div class="cc"><svg viewBox="0 0 80 80"><g fill="none" stroke="#dd2359" stroke-width="4"><path d="M18 27v29h30V46M27 27h21v10M62 29v24l-9-6V35z"/><path d="M16 22l36 35"/></g></svg><i><svg viewBox="0 0 14 10"><path d="M1 1l6 7 6-7" fill="none" stroke="#3c4654" stroke-width="2.600"/></svg></i></div>
      <div class="cc"><svg viewBox="0 0 80 80"><g fill="none" stroke="#dd2359" stroke-width="4"><path d="M34 26q0-6 6-6t6 6v14M34 34v6q0 6 8 6M26 40q0 14 14 14 6 0 9-3M54 40v5M40 54v10M30 63h20"/><path d="M22 22l35 36"/></g></svg><i><svg viewBox="0 0 14 10"><path d="M1 1l6 7 6-7" fill="none" stroke="#3c4654" stroke-width="2.600"/></svg></i></div>
      <div class="cc grey"><svg viewBox="0 0 80 80"><g fill="none" stroke="#6a6a6a" stroke-width="3.600"><rect x="20" y="24" width="40" height="30" rx="3"/><path d="M40 54v6M26 59.500h28"/></g></svg></div>
      <div class="cc red"><svg viewBox="0 0 80 80"><path d="M19 42c7-15 36-15 43 0 1 4-2 8-5 7l-7-3-1-6q-8-3-16 0l-1 6-7 3c-4 1-7-3-6-7z" fill="none" stroke="#fff" stroke-width="4"/></svg></div>
    </div>

    <div class="side-tools">
      <div><svg viewBox="0 0 50 50"><path d="M25 3c-10 0-12 8-10 16 1 6 5 8 5 12 0 5-15 3-15 17h41c0-14-15-12-15-17 0-4 4-6 5-12 2-8-1-16-11-16z"/></svg>PEOPLE<i>11</i></div>
      <div><svg viewBox="0 0 50 50"><path d="M4 6h43v29H37v10L26 35H4z"/></svg>CHAT</div>
      <div><svg viewBox="0 0 50 50"><rect x="7" y="6" width="37" height="37" rx="2"/><path d="M13.500 16h6M22.500 16h6M31.500 16h6M13.500 25h6M22.500 25h6M31.500 25h6M13.500 34h6M22.500 34h6M31.500 34h6" stroke-width="5.500"/></svg>APPS</div>
      <div><svg viewBox="0 0 50 50"><path d="M21 5h8l2 6 5 2 5-3 5 6-3 5v5l4 4-4 7-6-1-5 3-2 6h-9l-2-6-5-3-6 1-4-7 4-4v-5l-3-5 5-6 5 3 5-2z"/><circle cx="25" cy="25" r="6"/></svg>SETTINGS</div>
    </div>

    <div class="clap"><svg width="38" height="44" viewBox="0 0 44 50"><g stroke="#45505f" stroke-width="3.400" stroke-linecap="round"><path d="M9 15l12 18M14 13l14 18M21 14l11 15M6 22l12 14M6 29l10 10M34 24l-1 12"/></g><path d="M12 32l20-10 5 14-12 9q-8 0-13-13z" fill="#45505f"/><path d="M36 22q2 8 3 17l-9 8" fill="none" stroke="#45505f" stroke-width="2"/><path d="M7 5l5 6M15 1v7M23 4l-3 6" stroke="#45505f" stroke-width="2"/></svg></div>

    <div class="layout-switch">
      <div><svg width="42" height="42" viewBox="0 0 42 42"><g fill="#454545"><circle cx="21" cy="7" r="6"/><path d="M9 23q2-9 12-9t12 9z"/><rect x="1" y="27" width="40" height="14" rx="3"/></g><path d="M6 31h8v6H6zM17 31h8v6h-8zM28 31h8v6h-8z" fill="#fff"/></svg></div>
      <div><svg width="42" height="42" viewBox="0 0 42 42"><rect x="3" y="3" width="36" height="36" rx="3" fill="none" stroke="#454545" stroke-width="3.600"/><circle cx="21" cy="15" r="6" fill="#454545"/><path d="M9 33q2-11 12-11t12 11z" fill="#454545"/></svg></div>
      <div class="act"><svg width="42" height="42" viewBox="0 0 42 42"><g fill="none" stroke="#fff" stroke-width="4"><rect x="3" y="5" width="14" height="13" rx="2"/><rect x="25" y="5" width="14" height="13" rx="2"/><rect x="3" y="25" width="14" height="13" rx="2"/><rect x="25" y="25" width="14" height="13" rx="2"/></g></svg></div>
    </div>
    <div class="tile-slider"><i></i><i></i><i></i><b></b></div>
    <div class="zoomer"><span>−</span><span>+</span><i>?</i></div>
  </section>
</main>
</body>
</html>
```
FILE: styles.css
```css
* { box-sizing: border-box; }
html, body { margin: 0; width: 3360px; height: 2100px; overflow: hidden; background: #000; }
body { font-family: Inter, "Liberation Sans", sans-serif; color: #fff; }
i, em { font-style: normal; }
p, h1, h3, ol { margin: 0; padding: 0; font-weight: 400; list-style: none; }
.defs { position: absolute; }
.desktop { position: relative; width: 3360px; height: 2100px; overflow: hidden; background: #000; white-space: nowrap; }

/* windows behind the meeting */
.back-window { position: absolute; left: 143px; top: 1500px; width: 60px; height: 602px; background: #1a1819; border: 1px solid #4a4a4a; border-radius: 0 0 0 30px; }
.back-window i { display: block; margin-top: 566px; height: 2px; background: #555; }
.browser { position: absolute; left: 158px; top: 1060px; width: 3202px; height: 1040px; padding-top: 954px; background: #fff; border-radius: 0 0 26px 26px; overflow: hidden; display: grid; grid-template-columns: 168px 450px 2215px; }
.canvas-nav { margin-top: -954px; padding: 971px 0 0 57px; background: #34434f; border-left: 2px solid #6a7680; }
.course-links { padding: 0 0 0 60px; display: flex; flex-direction: column; gap: 31px; }
.course-links a { font: 33px/42px Lato, sans-serif; color: #17608b; text-decoration: underline; text-decoration-thickness: 3px; text-underline-offset: 4px; }
.assignment { height: 56px; padding: 0 0 0 105px; border: 2px solid #a9b0b6; border-top: 0; font: 23.500px/24px Lato, sans-serif; color: #2d3b45; display: flex; align-items: flex-start; }
.assignment span { margin-left: 21px; padding-left: 16px; border-left: 2px solid #2d3b45; }
.side-window { position: absolute; left: 3200px; top: 238px; width: 159px; height: 872px; background: #1d1d1e; border: 2px solid #58585a; border-radius: 0 24px 24px 0; box-shadow: 0 20px 60px rgba(0,0,0,.5); display: grid; grid-template-rows: 104px 55px 602px 56px 1fr; }
.side-window i { border-bottom: 1px solid #3d3d3f; }
.side-line { position: absolute; left: 3340px; top: 133px; width: 20px; height: 2px; background: #444; }
.ide-bar { position: absolute; left: 163px; top: 1960px; width: 3082px; height: 62px; padding: 19px 0 0 10px; background: #2c2d2f; border: 2px solid #4c4d4f; border-bottom-width: 3px; border-radius: 0 0 20px 20px; box-shadow: 0 14px 60px 8px rgba(0,0,0,.72); display: grid; align-items: center; grid-template-columns: 49px 1980px 82px 48px 90px 116px 386px 30px 237px 1fr; font-size: 21.500px; color: #85868a; letter-spacing: 0; }

/* mac menu bar */
.menubar { position: absolute; inset: 0 480px auto 0; height: 50px; padding: 0 0 5px 39px; overflow: hidden; display: grid; align-items: center; grid-template-columns: 68px 174px 84px 88px 100px 138px 1435px 77px 371px 72px 59px 66px 87px 36px; font-size: 25.500px; color: #ececec; }
.clock { font-size: 25px; padding-top: 3px; }
.menubar .pct { font-size: 22.500px; }
.float-bar { position: absolute; z-index: 5; left: 2880px; top: 0; width: 480px; height: 64px; padding: 4px 0 4px 14px; background: #202125; color: #fff; display: flex; align-items: center; gap: 44px; overflow: hidden; }
.float-bar svg { width: 36px; height: 34px; flex: none; }
.float-bar svg + svg:nth-child(2) { margin-left: 7px; }
.float-bar .dim { color: #77787c; }
.float-bar .down { margin: -10px 0 0 9px; }

/* meeting window */
.meeting { position: absolute; left: 0; top: 50px; width: 3340px; height: 1936px; border-radius: 20px; background: #060606; box-shadow: 0 20px 70px rgba(0,0,0,.45); overflow: clip; }
.titlebar { height: 57px; background: #fbfbfb; color: #0c0c0c; font-size: 22.500px; letter-spacing: -.1px; display: grid; align-items: center; grid-template-columns: 164px 1372px 1498px 39px 153px 41px 1fr; }
.lights { display: flex; gap: 16px; padding-left: 16px; }
.lights i { width: 24px; height: 24px; border-radius: 50%; background: #ff5f57; }
.lights i:nth-child(2) { background: #febc2e; }
.lights i:nth-child(3) { background: #28c840; }
.brand { display: flex; align-items: baseline; gap: 7px; padding-bottom: 4px; color: #0b4fcf; font-size: 25.500px; letter-spacing: -.9px; }
.brand small { font: 20.500px "Liberation Sans", sans-serif; letter-spacing: -.6px; color: #111; }
.titlebar h1 { font-size: 26px; letter-spacing: 0; }
.gift { margin-bottom: 4px; }
.q { width: 32px; height: 32px; border-radius: 50%; background: #e8711f; color: #fff; font-weight: 600; font-size: 22px; line-height: 32px; text-align: center; }

.share { position: relative; height: 1879px; padding: 15px 0 0; font-family: "Open Sans", "Noto Sans", sans-serif; overflow: hidden; background: #060606; }
.ppt-title { height: 75px; padding-left: 35px; display: grid; align-items: center; grid-template-columns: 70px 123px 120px 97px 331px 461px 1439px 168px 1fr; font-size: 25.500px; letter-spacing: -.3px; color: #3d3d3f; }
.toggle { width: 93px; height: 43px; border: 2px solid #353536; border-radius: 22px; background: #181818; display: flex; align-items: center; gap: 14px; padding-left: 5px; font-size: 23px; }
.toggle i { width: 32px; height: 32px; border-radius: 50%; background: #3a3a3b; }
.ppt-title em { width: 0; margin-top: 7px; border: 6px solid transparent; border-top: 9px solid #4a4a4a; }
.search { width: 900px; height: 70px; margin-top: -4px; padding-left: 44px; border: 2px solid #161618; border-radius: 6px; background: #0b0b0c; display: flex; align-items: center; gap: 25px; }
.user { grid-column: 8; }
.ppt-title .na { position: absolute; left: 2847px; top: 26px; width: 52px; height: 52px; border-radius: 50%; background: #3a4a9f; color: #a4a9c8; font-size: 22px; line-height: 52px; text-align: center; }
.ppt-title > svg:last-child { position: absolute; left: 2900px; top: 32px; }

.tabs { height: 64px; margin-top: 17px; padding: 0 0 4px 48px; display: grid; align-items: center; grid-template-columns: 99px 122px 115px 110px 130px 181px 189px 185px 136px 133px 105px 1342px 184px 87px 148px; font-size: 27.500px; letter-spacing: -.35px; color: #cfcfcf; }
.tabs b { width: 82px; height: 60px; margin-top: 9px; line-height: 51px; border-bottom: 5px solid #d6a496; color: #dedede; letter-spacing: -1px; }
.btn { height: 52px; border: 2px solid #414143; border-radius: 8px; background: #202021; display: flex; align-items: center; gap: 8px; padding-left: 14px; font-weight: 600; font-size: 26px; letter-spacing: -.4px; }
.rec { width: 167px; } .com { width: 70px; padding-left: 18px; } .shr { width: 148px; background: #b03621; border-color: #b03621; color: #ecd6d0; }

.ribbon { height: 215px; margin: 0 18px; border-radius: 16px; background: #2b2a2c; display: flex; overflow: hidden; letter-spacing: -.3px; }
.group { position: relative; flex: none; display: grid; grid-template-rows: 171px 44px; background: linear-gradient(#5a5a5c,#5a5a5c) right 10px / 2px 192px no-repeat; }
.group p { font-size: 22px; line-height: 44px; text-align: center; color: #d2d2d2; letter-spacing: -.6px; }
.g-undo { width: 130px; } .g-undo p { text-align: left; padding-left: 39px; letter-spacing: -.2px; }
.g-clip { width: 216px; }
.g-slides { width: 403px; display: flex; background-position: 401px 10px; }
.g-slides svg { flex: none; } .g-slides span { margin: 16px 0 0 -146px; font-size: 25px; line-height: 30px; color: #aaa; }
.g-font { width: 673px; display: flex; gap: 8px; padding: 24px 0 0 20px; }
.g-font i { width: 340px; height: 40px; border: 2px solid #4d4d4f; border-radius: 6px; background: #1f1f20; }
.g-font i + i { width: 95px; }
.g-para { width: 501px; } .g-para p { text-align: left; padding-left: 184px; line-height: 41px; }
.launch { position: absolute; right: 7px; bottom: 12px; }
.g-draw { width: 793px; } .g-draw > p { padding-right: 37px; line-height: 41px; }
.tools { display: flex; padding: 18px 0 0 20px; }
.gallery { flex: none; margin-top: 5px; }
.big { display: flex; flex-direction: column; align-items: center; font-size: 25px; line-height: 35px; color: #d8d8d8; }
.cv { width: 14px; height: 10px; flex: none; }
.arrange { width: 118px; gap: 4px; padding-left: 2px; } .arrange span { margin-top: 1px; } .arrange .cv { margin-top: 8px; } .g-voice .cv { margin-top: 10px; }
.quick { width: 92px; padding-left: 2px; color: #6a6a6a; } .quick > svg + span { margin-top: 4px; }
.shape-list { margin-left: 15px; font-size: 25px; color: #686868; margin-top: -4px; }
.shape-list div { height: 55.500px; display: flex; align-items: flex-start; gap: 9px; line-height: 38px; letter-spacing: -.45px; }
.shape-list .cv { margin: 13px 0 0 4px; }
.g-edit { width: 233px; } .g-edit p { padding-right: 2px; }
.edit-list { padding: 14px 0 0 29px; font-size: 25px; color: #dadada; }
.edit-list div { height: 55.500px; display: flex; align-items: flex-start; gap: 6px; line-height: 38px; }
.edit-list .cv { margin: 13px 0 0 3px; } .edit-list .far { margin-left: 24px; }
.g-voice { width: 127px; } .g-voice .big { padding-top: 13px; gap: 0; } .g-voice .big span { margin-top: 6px; letter-spacing: 0; } .g-voice p { padding-right: 1px; }
.g-ideas { width: 126px; } .g-ideas .big { padding-top: 12px; color: #656565; } .g-ideas .big svg { margin-bottom: 9px; }
.collapse { margin: 179px 0 0 59px; }

.work { height: 1359px; display: flex; background: #080808; border-bottom: 2px solid #3a3a3c; position: relative; }
.thumbs { width: 450px; margin-left: 15px; overflow: hidden; flex: none; }
.thumbs li { height: 193px; margin-bottom: 45.400px; display: grid; grid-template-columns: 63px 341px; }
.thumbs li:first-child { margin-top: -97px; }
.thumbs b { margin: -3px 0 0 11px; font-size: 30px; line-height: 24px; font-weight: 400; color: #d6d6d6; }
.thumb { background: #fff; border-radius: 6px; padding: 13px 17px; overflow: hidden; color: #888; }
.thumb hr { margin: 0; height: 4px; border: 0; background: #cf8456; }
.thumb h3 { margin-top: 7px; font: 600 8.700px/11px Lato, sans-serif; color: #a8472d; }
.thumb .low { margin-top: 24px; font-size: 9.500px; }
.thumb small { display: block; margin-top: 5px; font-size: 6px; line-height: 10px; }
.thumb small.dk { margin-top: 10px; color: #333; font-weight: 700; }
.thumb svg { display: block; margin-top: 22px; }
.thumbs li:nth-child(5) svg { margin-top: 18px; }
.thumbs li:nth-child(3) h3 { margin-top: 15px; font-size: 9px; line-height: 13px; }
.thumbs li:nth-child(3) svg { margin-top: 36px; }
.thumb .vert { writing-mode: vertical-rl; transform: rotate(180deg); margin: 95px 0 0 60px; }
.t4 { padding: 0 8px; } .t4 small { margin-top: 4px; }
.t4 .cells { margin-top: 97px; height: 33px; display: flex; } .t4 .cells i { width: 56px; background: #dfe3ef; } .t4 .cells i + i { width: 130px; background: #7ea3d8; }
.sel { outline: 6px solid #d58372; }
.plots { margin-top: 20px; display: grid; grid-template-columns: 34px 34px; gap: 6px; padding-left: 3px; }
.plots i { height: 33px; background: linear-gradient(#7aaede 36%, #ea9292 36%); }
.plots i:nth-child(2), .plots i:nth-child(3) { background: linear-gradient(90deg, #7aaede 24%, #ea9292 24%); }
.pane-scroll { width: 32px; background: #454547; display: flex; align-items: flex-end; }
.pane-scroll i { width: 32px; height: 38px; margin-bottom: 1px; border-top: 3px solid #222; background: #5a5a5c; position: relative; }
.pane-scroll i::after { content: ""; position: absolute; left: 8px; top: 11px; border: 8px solid transparent; border-top: 10px solid #b5b5b5; border-bottom: 0; }
.slide { width: 2298px; height: 1292px; margin: 39px 0 0 261px; padding: 381px 0 0 997px; background: #fff; box-shadow: 0 0 0 2px #555; color: #1c1c1c; font: 35.900px/38.500px "Liberation Sans", sans-serif; position: relative; }
.work::after { content: ""; position: absolute; left: 505px; right: 3px; top: 0; bottom: 3px; border: solid #4a4a4c; border-width: 0 0 2px 2px; pointer-events: none; }
.slide ol { counter-reset: n; }
.slide li { counter-increment: n; display: block; margin-bottom: 23.500px; padding-left: 65px; text-indent: -65px; }
.slide li::before { content: counter(n) "."; display: inline-block; width: 65px; text-indent: 0; color: #cc7d58; font-size: 33px; line-height: 30px; }
.slide u { text-decoration: underline wavy #e04a4a 1.500px; text-underline-offset: 3px; text-decoration-skip-ink: none; }
.slide footer { position: absolute; left: 86px; bottom: 35px; font: 20px/24px Lato, sans-serif; color: #d08b68; }

.status { height: 47px; padding-left: 17px; background: #161417; display: grid; align-items: center; grid-template-columns: 156px 70px 260px 40px 1882px 39px 103px 113px 86px 87px 73px 300px 72px 34px; font-size: 22.500px; letter-spacing: -.55px; color: #cfcfcf; }
.status span:first-child { letter-spacing: -.2px; }
.status .on { width: 87px; height: 47px; margin-left: -1px; background: #29282b; display: grid; place-items: center; }

.taskbar { height: 87px; display: flex; align-items: stretch; background: linear-gradient(90deg, #221f22 0, #232123 1100px, #2e1c1a 1650px, #2f1b1a 2900px, #221a1b 3340px); }
.win { margin: 16px 31px 0 34px; flex: none; }
.tsearch { width: 747px; flex: none; background: #353334; border: 1px solid #5a595b; padding: 10px 0 0 22px; font-size: 30px; letter-spacing: -.2px; line-height: 64px; display: flex; gap: 32px; color: #bcbcbc; }
.tsearch svg { margin-top: 36px; }
.apps { width: 825px; flex: none; padding: 13px 0 0 22px; overflow: hidden; display: flex; gap: 47.600px; }
.apps svg { width: 60px; height: 60px; flex: none; }
.inner-bar { position: relative; width: 643px; height: 70px; flex: none; margin-top: -11px; background: #212024; box-shadow: 0 13px 0 #000; color: #cfced2; padding-left: 16px; display: grid; align-items: center; grid-template-columns: 130px 105px 105px 104px 131px 1fr; }
.inner-bar svg { width: 37px; height: 36px; }
.cnt { position: absolute; left: 473px; top: 3px; width: 33px; height: 33px; border-radius: 50%; background: #f6347c; color: #fff; font-size: 22px; line-height: 33px; text-align: center; }
.tray { flex: 1; padding: 0 0 0 270px; height: 87px; display: grid; align-items: center; grid-template-columns: 64px 188px 50px 50px 58px 80px 169px 40px; font-size: 28px; letter-spacing: -.6px; color: #e2dedd; }
.tray .wx { font-size: 29px; letter-spacing: 0; } .tray .eng { font-size: 26px; padding-bottom: 3px; letter-spacing: -.6px; }
.time { width: 130px; text-align: center; font-size: 25px; line-height: 39px; letter-spacing: -.4px; margin-top: -2px; }
.vscroll { position: absolute; left: 3305px; top: 387px; z-index: 3; }
.frame { position: absolute; inset: 1px 2px 2px; z-index: 2; border: 13px solid; border-image: linear-gradient(#14412c, #1a5c3e 8%, #227f53 22%, #238155 88%, #338e60) 1; }
.task-marks { position: absolute; z-index: 3; left: 1400px; bottom: 0; width: 277px; overflow: hidden; display: flex; gap: 19px; }
.task-marks i { width: 89px; height: 6px; flex: none; background: #d6cd8a; }

/* notepad */
.notepad { position: absolute; z-index: 3; left: 165px; top: 258px; width: 1499px; height: 1456px; background: #fff; border: 1px solid #777; border-top-color: #aaa; box-shadow: 0 10px 36px rgba(0,0,0,.4); color: #1b1b1b; font-family: "Open Sans", "Noto Sans", sans-serif; display: flex; flex-direction: column; letter-spacing: -.4px; }
.notepad header { height: 66px; padding: 0 41px 2px 15px; display: flex; align-items: center; gap: 8px; font-size: 25.500px; flex: none; }
.notepad .wc { margin-left: auto; }
.notepad nav { height: 40px; flex: none; padding-left: 11px; display: grid; grid-template-columns: 66px 69px 106px 80px 80px; font-size: 25px; line-height: 39px; border-bottom: 2px solid #f0f0f0; }
.notepad nav u { text-underline-offset: 4px; text-decoration-thickness: 2px; }
.editor { flex: 1; display: flex; min-height: 0; }
pre { flex: 1; margin: 0; padding: 43px 0 0 8px; font: 29px/38.250px "Liberation Mono", monospace; letter-spacing: 0; color: #1d1d1d; }
mark { background: #1279d7; color: #dcecfa; padding-top: 6px; }
.nscroll { width: 34px; background: #f0f0f0; padding: 13px 0 13px; display: flex; flex-direction: column; align-items: center; justify-content: space-between; }
.nscroll i { width: 34px; height: 1120px; margin-top: 104px; background: #cdcdcd; }
.notepad footer { height: 50px; flex: none; background: #f0f0f0; border-top: 2px solid #dedede; display: grid; grid-template-columns: 561px 305px 109px 261px 236px 1fr; font-size: 24.500px; line-height: 48px; }
.notepad footer span { border-right: 2px solid #d8d8d8; padding-left: 14px; }
.notepad footer span:nth-child(2) { padding-left: 20px; }
.notepad footer span:nth-child(5) { border: 0; }
.notepad footer svg { margin-top: 24px; }
.ibeam { position: absolute; left: 1425px; top: 1085px; }

/* meeting overlays */
.call-controls { position: absolute; z-index: 4; left: 1462px; top: 87px; display: flex; gap: 32px; }
.cc { position: relative; width: 80px; height: 80px; border-radius: 50%; background: #ccd3db; }
.cc.grey { background: #848484; } .cc.red { background: #dd2359; }
.cc i { position: absolute; left: 58px; top: 50px; width: 32px; height: 32px; border-radius: 50%; background: #fff; display: grid; place-items: center; }
.cc i svg { width: 16px; height: 10px; }
.side-tools { position: absolute; z-index: 4; left: 2752px; top: 89px; display: flex; }
.side-tools div { position: relative; width: 132px; display: flex; flex-direction: column; align-items: center; gap: 6px; font-weight: 700; font-size: 19.500px; line-height: 27px; letter-spacing: .2px; }
.side-tools svg { width: 48px; height: 48px; margin-bottom: 2px; fill: none; stroke: #fff; stroke-width: 4; }
.side-tools div:first-child svg { height: 52px; margin-bottom: -2px; }
.side-tools i { position: absolute; left: 66px; top: -8px; width: 33px; height: 33px; border-radius: 50%; background: #cbd2da; color: #3a4350; font: 600 18px/33px Inter, sans-serif; text-align: center; }
.clap { position: absolute; z-index: 4; left: 42px; top: 1007px; width: 80px; height: 80px; border-radius: 50%; background: #fff; display: grid; place-items: center; box-shadow: 0 4px 14px rgba(0,0,0,.5); }
.layout-switch { position: absolute; z-index: 4; left: 32px; top: 1848px; width: 192px; height: 56px; border-radius: 8px; background: #fff; display: flex; overflow: hidden; }
.layout-switch div { flex: 1; display: grid; place-items: center; }
.layout-switch .act { background: #1565c6; }
.tile-slider { position: absolute; z-index: 4; left: 283px; top: 1870px; width: 223px; height: 12px; border-radius: 6px; background: #1565c6; display: flex; align-items: center; gap: 64px; padding-left: 3px; }
.tile-slider i { width: 8px; height: 8px; border-radius: 50%; background: #fff; flex: none; }
.tile-slider b { position: absolute; right: -24px; top: -18px; width: 48px; height: 48px; border-radius: 50%; background: #1565c6; border: 9px solid #fff; }
.zoomer { position: absolute; z-index: 4; left: 556px; top: 1848px; width: 112px; height: 56px; border-radius: 8px; background: #fff; display: flex; align-items: center; color: #3c3c3c; font-size: 38px; font-weight: 400; text-align: center; line-height: 40px; padding-bottom: 5px; }
.zoomer span { flex: 1; }
.zoomer span:first-child { border-right: 1px solid #ccd; color: #aaa; }
.zoomer i { position: absolute; right: -8px; top: -6px; width: 28px; height: 28px; border-radius: 50%; background: #c8501a; color: #fff; font-size: 20px; font-weight: 600; line-height: 28px; }
```
